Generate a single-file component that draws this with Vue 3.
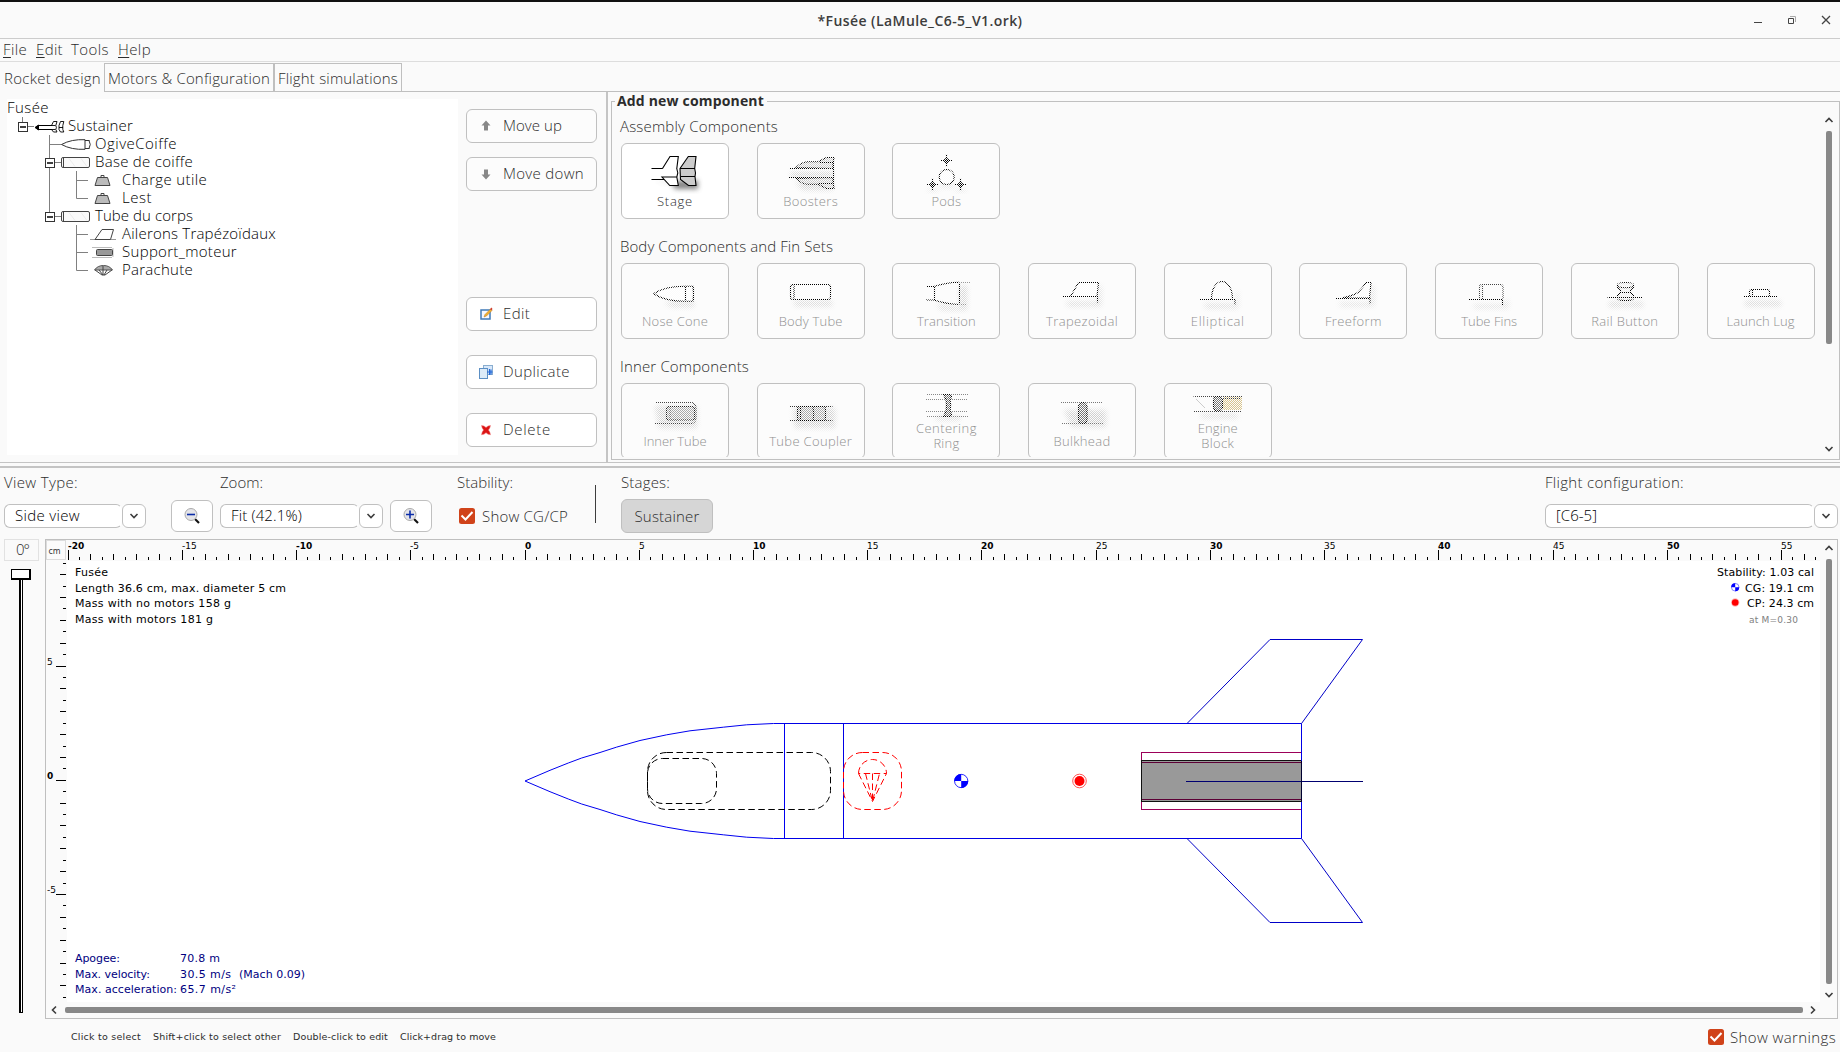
<script setup>
// Spreads a label's letters so that it takes exactly the given width.
const vFit = {
  mounted(el, { value }) {
    if (!value) return
    const natural = el.getBoundingClientRect().width
    const count = el.textContent.length
    el.style.letterSpacing = (value - natural) / count + 'px'
    el.style.width = value + 'px'
  },
}

const menus = [
  { key: 'F', rest: 'ile', w: 24, gap: 9 },
  { key: 'E', rest: 'dit', w: 27, gap: 8 },
  { key: '', rest: 'Tools', w: 38, gap: 9 },
  { key: 'H', rest: 'elp', w: 33, gap: 0 },
]

const tree = [
  { t: 'Fusée', x: 0, w: 42 },
  { t: 'Sustainer', x: 61, w: 65 },
  { t: 'OgiveCoiffe', x: 88, w: 82 },
  { t: 'Base de coiffe', x: 88, w: 98 },
  { t: 'Charge utile', x: 115, w: 85 },
  { t: 'Lest', x: 115, w: 30 },
  { t: 'Tube du corps', x: 88, w: 98 },
  { t: 'Ailerons Trapézoïdaux', x: 115, w: 154 },
  { t: 'Support_moteur', x: 115, w: 115 },
  { t: 'Parachute', x: 115, w: 71 },
]

const actions = [
  { t: 'Move up', w: 59, icon: 'up' },
  { t: 'Move down', w: 81, icon: 'down' },
  { t: 'Edit', w: 27, icon: 'edit' },
  { t: 'Duplicate', w: 67, icon: 'dup' },
  { t: 'Delete', w: 48, icon: 'del' },
]

const groups = [
  {
    title: 'Assembly Components', w: 158,
    items: [
      { id: 'stage', lines: [['Stage', 36]], on: true },
      { id: 'boosters', lines: [['Boosters', 55]] },
      { id: 'pods', lines: [['Pods', 30]] },
    ],
  },
  {
    title: 'Body Components and Fin Sets', w: 213,
    items: [
      { id: 'nose', lines: [['Nose Cone', 66]] },
      { id: 'tube', lines: [['Body Tube', 64]] },
      { id: 'transition', lines: [['Transition', 59]] },
      { id: 'trap', lines: [['Trapezoidal', 72]] },
      { id: 'ellip', lines: [['Elliptical', 54]] },
      { id: 'free', lines: [['Freeform', 57]] },
      { id: 'tubefins', lines: [['Tube Fins', 56]] },
      { id: 'rail', lines: [['Rail Button', 67]] },
      { id: 'lug', lines: [['Launch Lug', 68]] },
    ],
  },
  {
    title: 'Inner Components', w: 129,
    items: [
      { id: 'inner', lines: [['Inner Tube', 63]] },
      { id: 'coupler', lines: [['Tube Coupler', 83]] },
      { id: 'ring', lines: [['Centering', 61], ['Ring', 26]] },
      { id: 'bulk', lines: [['Bulkhead', 57]] },
      { id: 'engine', lines: [['Engine', 40], ['Block', 33]] },
    ],
  },
]

// Rulers: half-centimetre ticks, long every 5 cm.
const SCALE = 22.845
const X0 = 525
const Y0 = 780.3
const hTicks = []
for (let i = -40; i <= 113; i++) {
  const len = i % 10 === 0 ? 10 : i % 2 === 0 ? 6 : 3
  hTicks.push({ x: Math.floor(X0 + (i / 2) * SCALE), len, label: i % 10 === 0 ? i / 2 : null })
}
const vTicks = []
for (let i = -19; i <= 19; i++) {
  const len = i % 10 === 0 ? 10 : i % 2 === 0 ? 6 : 3
  vTicks.push({ y: Math.floor(Y0 - (i / 2) * SCALE), len, label: i % 10 === 0 ? i / 2 : null })
}

const texts = [
  { t: 'Fusée', x: 75, y: 576, w: 33 },
  { t: 'Length 36.6 cm, max. diameter 5 cm', x: 75, y: 592, w: 211 },
  { t: 'Mass with no motors 158 g', x: 75, y: 607, w: 156 },
  { t: 'Mass with motors 181 g', x: 75, y: 623, w: 138 },
  { t: 'Stability: 1.03 cal', x: 1717, y: 576, w: 97 },
  { t: 'CG: 19.1 cm', x: 1745, y: 592, w: 69 },
  { t: 'CP: 24.3 cm', x: 1747, y: 607, w: 67 },
  { t: 'Apogee:', x: 75, y: 962, w: 45, navy: true },
  { t: '70.8 m', x: 180, y: 962, w: 40, navy: true },
  { t: 'Max. velocity:', x: 75, y: 978, w: 75, navy: true },
  { t: '30.5 m/s', x: 180, y: 978, w: 51, navy: true },
  { t: '(Mach 0.09)', x: 239, y: 978, w: 66, navy: true },
  { t: 'Max. acceleration:', x: 75, y: 993, w: 102, navy: true },
  { t: '65.7 m/s²', x: 180, y: 993, w: 56, navy: true },
]

const hints = [
  { t: 'Click to select', w: 70 },
  { t: 'Shift+click to select other', w: 128 },
  { t: 'Double-click to edit', w: 95 },
  { t: 'Click+drag to move', w: 96 },
]
</script>

<template>
  <div class="window">
    <header class="titlebar">
      <span v-fit="205" class="title">*Fusée (LaMule_C6-5_V1.ork)</span>
      <svg class="controls" width="90" height="20" viewBox="1745 10 90 20">
        <path d="M1754 22.500h8" stroke="#444" />
        <path d="M1788.500 18.500h5v5h-5z" fill="none" stroke="#444" />
        <path d="M1790 16.500h5.500v5.500" fill="none" stroke="#aaa" />
        <path d="M1822 16l8 8M1830 16l-8 8" stroke="#444" stroke-width="1.300" />
      </svg>
    </header>

    <nav class="menubar">
      <span v-for="m in menus" :key="m.rest" v-fit="m.w" class="txt" :class="'gap' + m.gap"><u>{{ m.key }}</u>{{ m.rest }}</span>
    </nav>

    <div class="tabs">
      <div class="tab active"><span v-fit="97" class="txt">Rocket design</span></div>
      <div class="tab second"><span v-fit="162" class="txt">Motors &amp; Configuration</span></div>
      <div class="tab third"><span v-fit="120" class="txt">Flight simulations</span></div>
      <div class="rest"></div>
    </div>

    <section class="design">
      <div class="left">
        <div class="tree">
          <svg class="treeart" width="140" height="190" viewBox="7 99 140 190">
            <g stroke="#808080" fill="none">
              <path d="M22.500 117v5M28 126.500h6M49.500 135v24M49.500 144.500h12M55 162.500h6M49.500 168v45M55 216.500h6" />
              <path d="M76.500 171v27.500h11.500M76.500 180.500h11.500M76.500 225v45.500h11.500M76.500 234.500h11.500M76.500 252.500h11.500" />
            </g>
            <g v-for="p in [[18, 122], [45, 158], [45, 212]]" :key="p.join()" :transform="`translate(${p[0]} ${p[1]})`">
              <rect x=".5" y=".5" width="9" height="9" fill="#fff" stroke="#333" />
              <path d="M2 5h6" stroke="#000" stroke-width="1.500" />
            </g>
            <g fill="none" stroke="#000">
              <path d="M35 127.500l3.500-2.500v5z" fill="#000" />
              <path d="M38 125.500h14M38 129.500h14" stroke-width="1.200" />
              <path d="M51.500 125.500l2-4h3.500l-1.200 4 .6 2-.6 2 1.200 2.500h-3.500l-2-2.500h4M59 125.500l1.500-4h3.300l-1 4v4l1 2.500h-3.300l-1.500-2.500zM59 127.500h4M51.500 125.500h4" stroke-width=".9" />
            </g>
            <path d="M61.500 144.500q10-5.500 23.500-4.800v9.600q-13.500.7-23.500-4.800M85 140.500h4.500M85 148.500h4.500M89 140.500q2.500 4 0 8" fill="none" stroke="#333" />
            <g v-for="y in [157, 211]" :key="y" fill="none" stroke="#444">
              <rect x="61.500" :y="y + 0.500" width="28" height="10" rx="1.500" fill="#fafafa" />
              <path :d="`M63.500 ${y + 1}v9`" />
              <path :d="`M69 ${y + 1.500}l6 8M81 ${y + 1.500}l6 8`" stroke="#ececec" />
            </g>
            <g v-for="y in [175, 193]" :key="y">
              <path :d="`M97.500 ${y + 2.500}h10l2.500 8h-15z`" fill="#bbb" stroke="#444" />
              <path :d="`M101 ${y + 2}v-1.500h3v1.500`" fill="none" stroke="#444" />
            </g>
            <path d="M90 239.500h26" stroke="#999" />
            <path d="M95 239.500l7-10h11.500l-3 10z" fill="#fff" stroke="#444" />
            <path d="M92 247.500h20M92 257.500h20M113 248v9" stroke="#bbb" />
            <rect x="96.500" y="249.500" width="16" height="6" rx="1" fill="#999" stroke="#444" />
            <path d="M94.500 270q3-4.500 9-4.500t9 4.500z" fill="#aaa" stroke="#555" />
            <path d="M95 270l7 5h3l7-5M99 270l4 5v-9M107 270l-3 5" fill="none" stroke="#444" />
          </svg>
          <div v-for="r in tree" :key="r.t" class="node" :style="{ paddingLeft: r.x + 'px' }">
            <span v-fit="r.w" class="txt">{{ r.t }}</span>
          </div>
        </div>
        <div class="actions">
          <button v-for="a in actions" :key="a.t" class="btn" :class="a.icon">
            <svg width="16" height="16" viewBox="0 0 16 16">
              <path v-if="a.icon === 'up'" d="M8 2.500l4.500 5h-2.500v5h-4v-5h-2.500z" fill="#888" />
              <path v-else-if="a.icon === 'down'" d="M8 13.500l-4.500-5h2.500v-5h4v5h2.500z" fill="#888" />
              <g v-else-if="a.icon === 'edit'">
                <rect x="3" y="4" width="9" height="9" fill="#f4f8ff" stroke="#3f7ab8" stroke-width="1.500" />
                <path d="M6 11l1-2.500 5.500-5.500 1.500 1.500-5.500 5.500z" fill="#f0b030" stroke="#b87820" stroke-width=".5" />
                <path d="M12 3l1.500-1.500 1 1.500-1 1.500z" fill="#d04030" />
              </g>
              <g v-else-if="a.icon === 'dup'">
                <rect x="5.500" y="1.500" width="9" height="9" fill="#d8e8fa" stroke="#8aaed0" />
                <rect x="1.500" y="4.500" width="8" height="10" fill="#dcebf8" stroke="#5c8fc4" />
                <path d="M9 8h5.500M11.500 5v6M13 5.500v5" stroke="#2468d8" stroke-width="1.200" />
              </g>
              <path v-else d="M3.500 3.500l2.500.5 2 1.500 2-1.500 2.500-.5-.7 2.500-1.300 2 1.300 2 .7 2.800-2.500-.6-2-1.500-2 1.500-2.500.6.7-2.800 1.300-2-1.300-2z" fill="#dc1414" stroke="#f08080" stroke-width=".5" />
            </svg>
            <span v-fit="a.w" class="txt">{{ a.t }}</span>
          </button>
        </div>
      </div>

      <div class="palette">
        <div class="legend"><i class="l1"></i><b v-fit="147">Add new component</b><i class="l2"></i></div>
        <div class="palettebody">
          <div class="groups">
            <div v-for="g in groups" :key="g.title" class="group">
              <div class="heading"><span v-fit="g.w" class="txt">{{ g.title }}</span></div>
              <div class="cards">
                <div v-for="c in g.items" :key="c.id" class="card" :class="{ on: c.on, two: c.lines.length > 1 }">
                  <svg class="art" width="60" height="46" viewBox="0 0 60 46" fill="none" stroke="#000" stroke-width="1.100">
                    <g v-if="c.id === 'stage'">
                      <path class="shadow" d="M10 34h16l4 7h23v-9z" />
                      <path d="M7 21h25v10H7z" fill="#fff" stroke="none" />
                      <path d="M6.500 20.500h25.500M6.500 31.500h12.500" />
                      <path d="M17.500 20.500l7.500-12h8.300l-1.500 12 1 4.500-1 4 1.500 8.500h-8.500l-7.800-8.500h14.800" fill="#fff" />
                      <path d="M35 20.500l8.300-12h7.700l-1.300 12 .8 4.500-.5 3.500 1 9h-7.500l-8-6zM35 20.500h14.500M36 28.500h14" fill="#ccc" />
                    </g>
                    <g v-else-if="c.id === 'boosters'">
                      <path class="shadow" d="M14 34h38v8H22z" />
                      <path class="soft" d="M10 24h42v5H10z" />
                      <path d="M8 20.500h44.500M8 29.500h44.500M52.500 9.500v31" />
                      <path d="M15 19.500q5-5.500 12-5.800h10l8.500-4.200h7.500l-1 6v5z" fill="#ccc" />
                      <path d="M15 30.500q5 5.500 12 5.800h10l8.500 4.200h7.500l-1-6v-5z" fill="#ccc" />
                      <path d="M38 14.500h14M38 35.500h14" />
                    </g>
                    <g v-else-if="c.id === 'pods'">
                      <path class="shadow" d="M24 36h14v3H24zM12 41h10v2H12zM40 41h10v2H40z" />
                      <circle cx="30.700" cy="29" r="7.500" fill="#fff" />
                      <g v-for="p in [[30.500, 12.500], [16.500, 36.500], [44.500, 36.500]]" :key="p.join()">
                        <path :d="`M${p[0] - 6.500} ${p[1]}h13M${p[0]} ${p[1] - 6.500}v13`" />
                        <circle :cx="p[0]" :cy="p[1]" r="2" />
                      </g>
                    </g>
                    <g v-else-if="c.id === 'nose'">
                      <path class="shadow" d="M20 34h29v5H26z" />
                      <path d="M8.500 25.700q12-7.500 31.500-7.400h8q1 7 0 15h-8q-19.500 0-31.500-7.600M40.500 18.300v15M48.500 19.500v13" fill="#fff" />
                    </g>
                    <g v-else-if="c.id === 'tube'">
                      <path class="shadow" d="M13 33h38v5H14z" />
                      <rect x="9.500" y="16.500" width="40" height="15" rx="2.500" fill="#fff" />
                      <path d="M13 17.500v13" />
                    </g>
                    <g v-else-if="c.id === 'transition'">
                      <path class="shadow" d="M20 36l24 3V18h7v24H26z" />
                      <path d="M10 18.500h8q12-4 25-4.200M43 36.500q-13-.5-25-4.500h-8M18.500 18.500V32M43.500 14.500v22.500" />
                      <path d="M43 14.500h11M43 36.500h8" stroke="#999" />
                    </g>
                    <g v-else-if="c.id === 'trap'">
                      <path class="shadow" d="M14 34h32V18h3v20H16z" />
                      <path d="M18.500 28.500l8-14h20l-1.500 14z" fill="#fff" />
                      <path d="M11 28.500h34.500v6" />
                    </g>
                    <g v-else-if="c.id === 'ellip'">
                      <path class="shadow" d="M16 36h32V24h2v16H18z" />
                      <path d="M23.500 31.500c0-24 21-24 21 0" fill="#fff" />
                      <path d="M11.500 31.500h35.500v5" />
                    </g>
                    <g v-else-if="c.id === 'free'">
                      <path class="shadow" d="M16 35h32V18h3v20H18z" />
                      <path d="M19 30q10-2 16-5.500 5-5 8-10h5l-1.500 15.500z" fill="#fff" />
                      <path d="M12 30.500h35v5" />
                    </g>
                    <g v-else-if="c.id === 'tubefins'">
                      <path class="shadow" d="M14 37h32V32h3v8H16z" />
                      <path d="M20.500 31v-12q0-2.500 2.500-2.500h18.500q2.500 0 2.500 2.500V31M23.500 17v14" stroke="#444" />
                      <path d="M9 31.500h34.500v5.500" />
                    </g>
                    <g v-else-if="c.id === 'rail'">
                      <path class="shadow" d="M14 34h34v5H14z" />
                      <path d="M22.500 16.500q0-2 8-2t8 2v2.500q0 2-3 2.500v3l3 3v3q0 2-8 2t-8-2v-3l3-3v-3q-3-.5-3-2.500zM22.500 18.500q8 2.500 16 0M26 24.500h9" fill="#eee" />
                      <path d="M12.500 29.500h35" />
                    </g>
                    <g v-else-if="c.id === 'lug'">
                      <path class="shadow" d="M14 33h36v5H14z" />
                      <rect x="18.500" y="21.500" width="20" height="7" rx="2" fill="#fff" />
                      <path d="M12.500 28.500h34M21.500 22v6" />
                    </g>
                    <g v-else-if="c.id === 'inner'">
                      <path class="shadow" d="M10 18h42v22H14z" />
                      <path d="M10 14.500h37q4 1.500 4 6v9q0 4.500-4 6H10" stroke="#444" />
                      <rect x="21.500" y="18.500" width="28" height="13.500" rx="2.500" fill="#aaa" stroke="#222" />
                      <path d="M25 19v13" stroke="#666" />
                    </g>
                    <g v-else-if="c.id === 'coupler'">
                      <path class="shadow" d="M12 20h42v20H14z" />
                      <path d="M8.500 18.500h43M8.500 32.500h43" stroke="#333" />
                      <rect x="16.500" y="18.500" width="28" height="14" rx="2.500" fill="#aaa" />
                      <path d="M19.500 19v13M32 19q1.500 7 0 14" />
                    </g>
                    <g v-else-if="c.id === 'ring'">
                      <path class="shadow" d="M20 36h24v4H20z" />
                      <path d="M10 14.500h42M10 19.500h42M10 31.500h42M10 36.500h42" stroke="#888" />
                      <path d="M27.500 14.500h6.500q3 2 0 5 1.500 6 0 12 3 3 0 5h-6.500l2.500-5q1-6 0-12z" fill="#777" />
                    </g>
                    <g v-else-if="c.id === 'bulk'">
                      <path class="shadow" d="M12 22h42v17H20z" />
                      <path d="M9 14.500h42M9 35.500h42" stroke="#777" />
                      <rect x="26.500" y="14.500" width="8.500" height="21" rx="4" fill="#777" />
                      <path d="M37 21l10 10" stroke="#ccc" />
                    </g>
                    <g v-else>
                      <path class="shadow" d="M12 34h38v4H14z" />
                      <path d="M35 17h19v13H35z" fill="#d8c48c" stroke="none" />
                      <path d="M5.500 16.500h48.500M5.500 31.500h48.500M35 18.500h18" stroke="#444" />
                      <rect x="25.500" y="16.500" width="9" height="14.500" rx="4" fill="#777" />
                      <path d="M8 19l9 9" stroke="#ccc" />
                    </g>
                  </svg>
                  <div v-for="l in c.lines" :key="l[0]" class="cap"><span v-fit="l[1]">{{ l[0] }}</span></div>
                </div>
              </div>
            </div>
          </div>
          <div class="vscroll">
            <svg width="10" height="8" viewBox="0 0 10 8"><path d="M1.500 6l3.500-3.500 3.500 3.500" /></svg>
            <i class="thumb short"></i>
            <svg width="10" height="8" viewBox="0 0 10 8"><path d="M1.500 2l3.500 3.500 3.500-3.500" /></svg>
          </div>
        </div>
      </div>
    </section>
    <div class="divider"></div>

    <section class="toolbar">
      <div class="tg">
        <label><span v-fit="74" class="txt">View Type:</span></label>
        <div class="combo c1"><div><span v-fit="65" class="txt">Side view</span></div><em><svg width="10" height="8" viewBox="0 0 10 8"><path d="M1.500 2l3.500 3.500 3.500-3.500" /></svg></em></div>
      </div>
      <div class="tg">
        <label></label>
        <button class="zoombtn"><svg width="18" height="18" viewBox="0 0 18 18"><path d="M12 12l4 4" stroke="#111" stroke-width="2.200" /><circle cx="8" cy="7.500" r="6" fill="#e4e4e8" stroke="#aaa" /><path d="M4 7.500h8" stroke="#0a2ca8" stroke-width="1.600" /></svg></button>
      </div>
      <div class="tg">
        <label><span v-fit="43" class="txt">Zoom:</span></label>
        <div class="combo c2"><div><span v-fit="71" class="txt">Fit (42.1%)</span></div><em><svg width="10" height="8" viewBox="0 0 10 8"><path d="M1.500 2l3.500 3.500 3.500-3.500" /></svg></em></div>
      </div>
      <div class="tg">
        <label></label>
        <button class="zoombtn"><svg width="18" height="18" viewBox="0 0 18 18"><path d="M12 12l4 4" stroke="#111" stroke-width="2.200" /><circle cx="8" cy="7.500" r="6" fill="#e4e4e8" stroke="#aaa" /><path d="M4 7.500h8M8 3.500v8" stroke="#0a2ca8" stroke-width="1.600" /></svg></button>
      </div>
      <div class="tg stab">
        <label><span v-fit="56" class="txt">Stability:</span></label>
        <div class="check"><svg width="16" height="16" viewBox="0 0 16 16"><rect width="16" height="16" rx="2.500" fill="#d0431a" /><path d="M2.500 7.500l4 4 7-7.500" fill="none" stroke="#fff" stroke-width="2" /></svg><span v-fit="86" class="txt">Show CG/CP</span></div>
      </div>
      <div class="sep"></div>
      <div class="tg">
        <label><span v-fit="49" class="txt">Stages:</span></label>
        <button class="stagebtn"><span v-fit="65" class="txt">Sustainer</span></button>
      </div>
      <div class="tg">
        <label><span v-fit="139" class="txt">Flight configuration:</span></label>
        <div class="combo c3"><div><span v-fit="41" class="txt">[C6-5]</span></div><em><svg width="10" height="8" viewBox="0 0 10 8"><path d="M1.500 2l3.500 3.500 3.500-3.500" /></svg></em></div>
      </div>
    </section>

    <section class="view">
      <div class="angle">
        <div class="deg"><span v-fit="13" class="txt">0°</span></div>
        <div class="knob"></div>
        <div class="track"></div>
      </div>
      <div class="pane">
        <svg class="drawing" width="1774" height="462" viewBox="46 540 1774 462">
          <rect x="67" y="561" width="1753" height="441" fill="#fff" />
          <rect x="46.500" y="540.500" width="19" height="19" fill="#fbfbfb" stroke="#dcdcdc" />
          <text x="48.500" y="554" class="unit" textLength="12">cm</text>
          <g v-for="k in hTicks" :key="'h' + k.x">
            <rect :x="k.x" :y="560 - k.len" width="1" :height="k.len" />
            <text v-if="k.label !== null" :x="k.x" y="549" class="rl" :class="{ bold: k.label % 10 === 0 }">{{ k.label }}</text>
          </g>
          <g v-for="k in vTicks" :key="'v' + k.y">
            <rect :x="66 - k.len" :y="k.y" :width="k.len" height="1" />
            <text v-if="k.label !== null" x="47" :y="k.y - 1" class="rl" :class="{ bold: k.label % 10 === 0 }">{{ k.label }}</text>
          </g>

          <text v-for="s in texts" :key="s.t" :x="s.x" :y="s.y" :textLength="s.w" class="info" :class="{ navy: s.navy }">{{ s.t }}</text>
          <text x="1749" y="623" textLength="49" class="mach">at M=0.30</text>

          <g fill="none">
            <rect x="1141.500" y="752.500" width="160" height="57" stroke="#9c0059" />
            <rect x="1141.500" y="760.500" width="160" height="41" fill="#999" stroke="#111" />
            <path d="M1142 762.500h160M1142 799.500h160" stroke="#5c0035" />
            <path d="M784.500 723.500H773.500l-26.800 1.300-23.400 2.400-33.300 3.600-23.300 4-26.700 5.700-23.300 6.600-16.700 5.400-18.300 5.500-13.400 5-18.300 7.300-25 10.700 25 10.700 18.300 7.300 13.400 5 18.300 5.500 16.700 5.400 23.300 6.600 26.700 5.700 23.300 4 33.300 3.600 23.400 2.400 26.800 1.300h11z" stroke="#0000f0" />
            <path d="M784 723.500h517.500v115H784M843.500 723.500v115" stroke="#0000e6" />
            <path d="M1187 723.500l83-84h92.500l-61 84M1187 838.500l83 84h92.500l-61-84" stroke="#0000c8" />
            <path d="M1186 781.500h177" stroke="#000070" />
            <path d="M1301.500 761v41" stroke="#000030" />
            <g stroke="#000" stroke-dasharray="6.500 3.500">
              <rect x="647.500" y="752.500" width="183" height="57" rx="19" />
              <rect x="647.500" y="758.500" width="69" height="45" rx="15" />
            </g>
            <g stroke="#f00" stroke-dasharray="6.500 3.500">
              <rect x="843.500" y="752.500" width="58" height="57" rx="19" />
              <path d="M858.500 773.500a14 14 0 1 1 28 0zM858.500 773.500l14 28 14-28M865.500 773.500l7 28 7-28M872.500 773.500v28" />
            </g>
          </g>
          <g v-for="m in [[961.200, 781, 7], [1735.200, 587.200, 4]]" :key="m[0]" :transform="`translate(${m[0]} ${m[1]}) scale(${m[2]})`">
            <circle r=".95" fill="#fff" stroke="#00f" stroke-width=".12" />
            <path d="M0 0H-1A1 1 0 0 1 0 -1zM0 0H1A1 1 0 0 1 0 1z" fill="#00f" />
          </g>
          <circle cx="1079.500" cy="781" r="6.800" fill="#fff" stroke="#f55" />
          <circle cx="1079.500" cy="781" r="5" fill="#f00" />
          <circle cx="1735.200" cy="602.500" r="4.200" fill="#fbb" />
          <circle cx="1735.200" cy="602.500" r="3.300" fill="#f00" />
        </svg>
        <div class="vscroll lower">
          <svg width="10" height="8" viewBox="0 0 10 8"><path d="M1.500 6l3.500-3.500 3.500 3.500" /></svg>
          <i class="thumb"></i>
          <svg width="10" height="8" viewBox="0 0 10 8"><path d="M1.500 2l3.500 3.500 3.500-3.500" /></svg>
        </div>
        <div class="hscroll">
          <svg width="8" height="10" viewBox="0 0 8 10"><path d="M6 1.500l-3.500 3.500 3.500 3.500" /></svg>
          <i></i>
          <svg width="8" height="10" viewBox="0 0 8 10"><path d="M2 1.500l3.500 3.500-3.500 3.500" /></svg>
        </div>
      </div>
    </section>

    <footer class="status">
      <span v-for="h in hints" :key="h.t" v-fit="h.w" class="hint">{{ h.t }}</span>
      <div class="check warn"><svg width="16" height="16" viewBox="0 0 16 16"><rect width="16" height="16" rx="2.500" fill="#d0431a" /><path d="M2.500 7.500l4 4 7-7.500" fill="none" stroke="#fff" stroke-width="2" /></svg><span v-fit="106" class="txt">Show warnings</span></div>
    </footer>
  </div>
</template>

<style>
body { margin: 0; background: #fafafa; }
</style>

<style scoped>
.window { width: 1840px; height: 1052px; display: flex; flex-direction: column; overflow: hidden; background: #fafafa; color: #2c2c2c; font: 350 15px "Open Sans", "Noto Sans", sans-serif; }
.window * { box-sizing: border-box; }
.window svg { display: block; flex: none; }
.window svg.treeart { position: absolute; left: 0; top: 0; }
button { font: inherit; color: inherit; margin: 0; padding: 0; }
.txt, .title, .hint, .cap span, .legend b { display: inline-block; white-space: pre; flex: none; }

.titlebar { height: 39px; border-top: 2px solid #111; border-bottom: 1px solid #ccc; display: grid; grid-template-columns: 1fr auto 1fr; align-items: center; }
.title { grid-column: 2; font-weight: 600; font-size: 14px; line-height: 34px; padding-top: 2px; color: #3d3d3d; }
.controls { justify-self: end; margin-right: 5px; }
.menubar { height: 23px; border-bottom: 1px solid #ddd; display: flex; padding-left: 3px; line-height: 20px; }
.menubar u { text-underline-offset: 2px; text-decoration-thickness: 1px; }
.gap8 { margin-right: 8px; }
.gap9 { margin-right: 9px; }

.tabs { height: 30px; display: flex; line-height: 29px; }
.tab { border-bottom: 1px solid #bfbfbf; }
.tab.active { width: 104px; padding-left: 4px; line-height: 32px; border: 0; }
.tab.second { width: 170px; margin-top: 1px; padding-left: 3px; border: 1px solid #bfbfbf; }
.tab.third { width: 128px; margin-top: 1px; padding-left: 3px; border: 1px solid #bfbfbf; }
.rest { flex: 1; border-bottom: 1px solid #bfbfbf; }

.design { height: 371px; display: flex; border-bottom: 1px solid #c4c4c4; }
.left { width: 608px; border-right: 2px solid #c4c4c4; display: flex; padding: 7px 0 0 7px; }
.tree { width: 451px; height: 356px; background: #fff; position: relative; color: #000; }
.node { height: 18px; line-height: 17px; }
.actions { width: 131px; margin-left: 8px; padding-top: 10px; }
.btn { width: 131px; height: 34px; display: flex; align-items: center; background: #fff; border: 1px solid #c0c0c0; border-radius: 6px; padding-left: 11px; gap: 9px; }
.btn .txt { line-height: 30px; padding-bottom: 2px; }
.btn.up, .btn.down { background: #fcfcfc; }
.btn.down { margin-top: 14px; }
.btn.edit { margin-top: 106px; }
.btn.dup, .btn.del { margin-top: 24px; }

.palette { flex: 1; margin: 0 0 2px 3px; position: relative; display: flex; flex-direction: column; }
.legend { display: flex; height: 18px; align-items: flex-start; }
.legend i { height: 9px; margin-top: 9px; border-top: 1px solid #c0c0c0; }
.legend .l1 { width: 4px; border-left: 1px solid #c0c0c0; }
.legend .l2 { flex: 1; margin-left: 3px; border-right: 1px solid #c0c0c0; }
.legend b { margin-left: 2px; font-size: 14px; font-weight: 700; line-height: 17px; }
.palettebody { flex: 1; min-height: 0; display: flex; border: 1px solid #c0c0c0; border-top: 0; }
.groups { flex: 1; height: 347px; overflow: hidden; padding-left: 8px; }
.group { height: 120px; }
.heading { height: 33px; line-height: 33px; }
.heading .txt { line-height: 32px; }
.cards { display: flex; gap: 27.700px; padding-left: 1px; }
.card { width: 108px; height: 76px; border: 1px solid #c0c0c0; border-radius: 6px; background: #fcfcfc; color: #909090; padding-top: 4px; display: flex; flex-direction: column; align-items: center; font-size: 13px; line-height: 15px; flex: none; }
.card.on { background: #fff; color: #2c2c2c; }
.card.two .art { margin: -8px 0 -5px; }
.cap { height: 15px; }
.card:not(.on) .art { -webkit-mask: conic-gradient(#000 25%, transparent 0 50%, #000 0 75%, transparent 0) 0 0 / 2px 2px; mask: conic-gradient(#000 25%, transparent 0 50%, #000 0 75%, transparent 0) 0 0 / 2px 2px; }
.shadow { fill: #999; stroke: none; filter: blur(2.500px); opacity: .45; }
.on .shadow { fill: #666; opacity: .8; }
.soft { fill: #ccc; stroke: none; filter: blur(2px); }

.vscroll { width: 20px; display: flex; flex-direction: column; align-items: center; }
.vscroll path, .hscroll path, .combo path { fill: none; stroke: #3d3d3d; stroke-width: 1.600; }
.thumb { width: 6px; flex: 1; background: #888; border-radius: 2px; margin: 7px 0; }
.palettebody .vscroll { padding: 6px 0; }
.thumb.short { flex: none; height: 213px; margin: 7px 0 101px; }

.divider { height: 5px; border-bottom: 2px solid #c4c4c4; margin-bottom: 1px; }

.toolbar { height: 70px; display: grid; grid-template-columns: 167px 49px 170px 68px 137px 26px 924px 293px; padding: 3px 0 0 4px; }
.tg { display: flex; flex-direction: column; align-items: flex-start; padding-bottom: 2px; }
.stab { margin-left: -1px; }
.tg label { height: 23px; line-height: 21px; display: block; }
.tg > :nth-child(2) { margin: auto 0; }
.combo { height: 24px; display: flex; color: #000; }
.combo div, .combo em { border: 1px solid #c0c0c0; background: #fff; border-radius: 6px; height: 24px; }
.combo div { flex: 1; padding-left: 10px; line-height: 20px; border-right-color: transparent; }
.combo em { width: 24px; display: flex; align-items: center; justify-content: center; }
.c1 { width: 142px; }
.c2 { width: 163px; }
.c3 { width: 293px; }
.zoombtn { width: 42px; height: 32px; border: 1px solid #c0c0c0; border-radius: 6px; background: #fff; display: flex; align-items: center; justify-content: center; }
.check { display: flex; align-items: center; gap: 7px; padding-left: 2px; line-height: 20px; }
.check .txt { padding-bottom: 1px; }
.sep { width: 1px; height: 38px; background: #3d3d3d; margin-top: 13px; }
.stagebtn { width: 92px; height: 34px; background: #d6d6d6; border: 1px solid #bfbfbf; border-radius: 6px; line-height: 30px; }

.view { height: 480px; display: flex; padding-left: 4px; }
.angle { width: 41px; display: flex; flex-direction: column; }
.deg { width: 35px; height: 22px; border: 1px solid #e2e2e2; line-height: 18px; padding-left: 11px; }
.knob { width: 20px; height: 11px; margin: 8px 0 0 7px; border: 1px solid #000; border-right-width: 2px; border-bottom-width: 2px; background: #fff; }
.track { width: 4px; height: 433px; margin-left: 15px; border: 1px solid #000; border-left-width: 2px; border-top: 0; background: #fff; }
.pane { width: 1793px; height: 480px; border: 1px solid #bfbfbf; display: grid; grid-template-columns: 1774px 17px; grid-template-rows: 462px 16px; }
.lower { padding: 4px 0 3px; margin-left: -1px; }
.lower .thumb { margin: 7px 0; }
.hscroll { grid-column: 1; display: flex; align-items: center; padding: 0 3px 0 4px; width: 1774px; }
.hscroll i { flex: 1; height: 6px; background: #888; border-radius: 2px; margin: 0 6px 0 7px; }

.drawing rect, .drawing line { shape-rendering: crispEdges; }
.drawing rect[rx] { shape-rendering: auto; }
.drawing text { font-family: "DejaVu Sans", sans-serif; font-weight: 400; fill: #000; }
.drawing .rl { font-size: 9px; }
.drawing .rl.bold { font-weight: 700; }
.drawing .unit { font-size: 8px; fill: #333; }
.drawing .info { font-size: 11px; }
.drawing .info.navy { fill: #000080; }
.drawing .mach { font-size: 9px; fill: #808080; }

.status { height: 33px; display: flex; padding-left: 71px; gap: 12px; }
.hint { font: 400 9.500px/35px "DejaVu Sans", sans-serif; }
.warn { margin-left: auto; padding: 0 4px 0 0; height: 36px; gap: 6px; }
</style>
